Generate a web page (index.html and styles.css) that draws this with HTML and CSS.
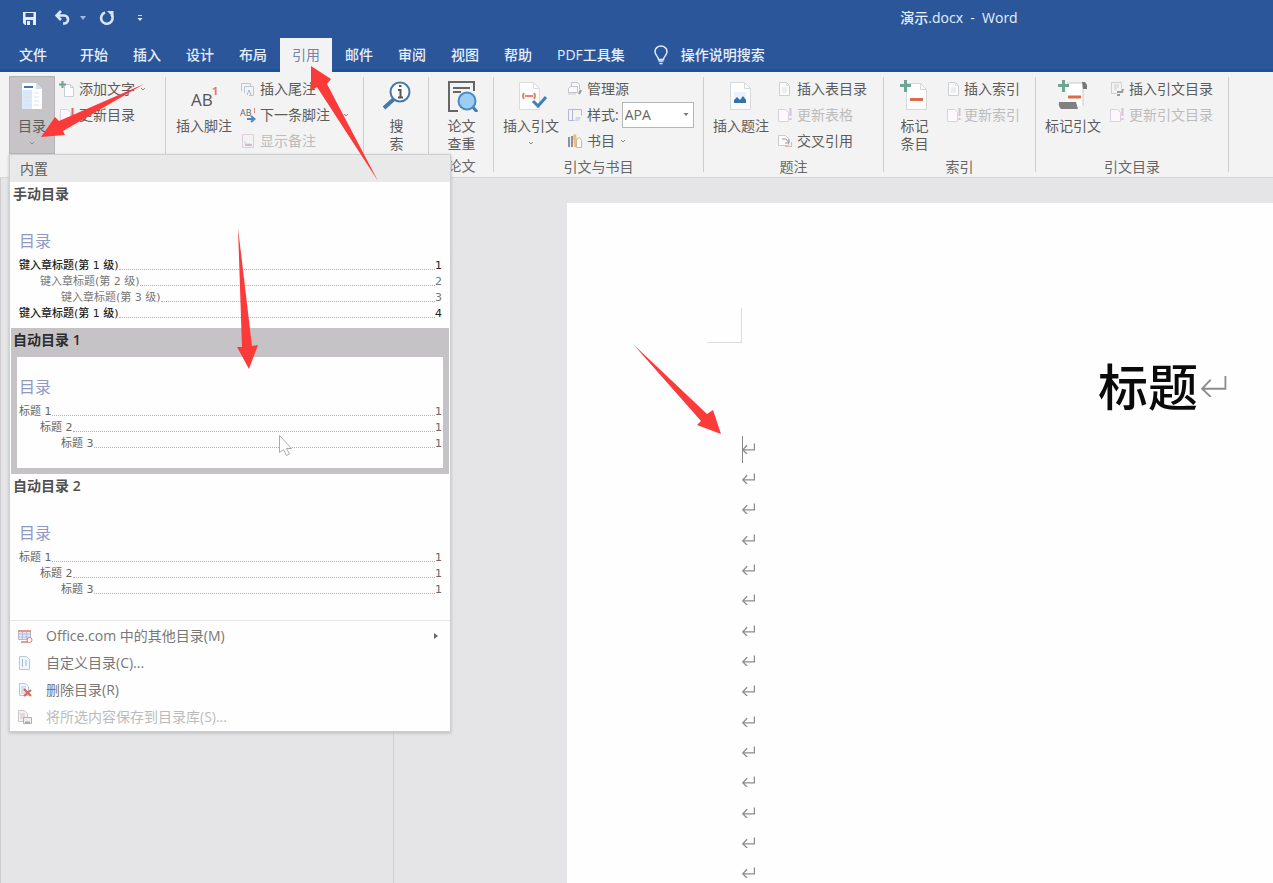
FILE: index.html
```html
<!DOCTYPE html>
<html lang="zh-CN">
<head>
<meta charset="utf-8">
<title>演示.docx - Word</title>
<link rel="stylesheet" href="styles.css">
</head>
<body>
<svg class="defs" aria-hidden="true">
  <symbol id="chev" viewBox="0 0 8 6"><path d="M2 2l2 2 2-2" fill="none" stroke="currentColor"/></symbol>
  <symbol id="ret" viewBox="0 0 28 24"><path d="M27 1v14H2M11 5L1.500 15L11 24" fill="none" stroke="currentColor" stroke-width="var(--sw)"/></symbol>
  <symbol id="update" viewBox="0 0 16 16"><path d="M1.500 2.500h7l3 3v9h-10z" fill="#fcf8fc" stroke="#dccfe0"/><path d="M13.500 1v8M13.500 11v2" stroke="currentColor" stroke-width="2"/></symbol>
  <symbol id="page" viewBox="0 0 16 16"><path d="M2.500 1.500h7l3 3v10h-10z" fill="#fbfbfb" stroke="#ccd0d6"/><path d="M9.500 1.500v3h3M5 7h5M5 9h5M5 11h5" fill="none" stroke="#dde0e4"/></symbol>
</svg>
<header class="titlebar">
  <div class="qat">
    <button class="qbtn" aria-label="保存"><svg width="15" height="15" viewBox="0 0 15 15"><path d="M1 1h13v13H3l-2-2z" fill="#e6efff"/><path d="M3.500 2h8v4h-8zM4 9h7v5H4z" fill="#2b579a"/><path d="M5 10h3v4H5z" fill="#e6efff"/></svg></button>
    <button class="qbtn undo" aria-label="撤消"><svg width="16" height="16" viewBox="0 0 16 16"><path d="M2 5.500h6.500a4 4 0 0 1 1 8H8M6 1L1.500 5.500L6 10" fill="none" stroke="#d9e6fb" stroke-width="2.600"/></svg><svg class="qchev" width="8" height="6" viewBox="0 0 8 6"><path d="M1 1h6L4 5z" fill="currentColor"/></svg></button>
    <button class="qbtn" aria-label="重复"><svg width="16" height="16" viewBox="0 0 16 16"><path d="M6 2.500a5.800 5.800 0 1 0 6.500 2" fill="none" stroke="#d9e6fb" stroke-width="2.600"/><path d="M8 1h6.500v6.500z" fill="#d9e6fb"/></svg></button>
    <button class="qbtn more" aria-label="自定义快速访问工具栏"><svg width="6" height="8" viewBox="0 0 6 8"><path d="M1 1.500h4" stroke="#b9d2f5"/><path d="M.500 4h5L3 7z" fill="#e6efff"/></svg></button>
  </div>
  <h1 class="wtitle">演示.docx&nbsp; -&nbsp; Word</h1>
</header>
<nav class="tabs">
  <button class="tab file">文件</button>
  <button class="tab">开始</button>
  <button class="tab">插入</button>
  <button class="tab">设计</button>
  <button class="tab">布局</button>
  <button class="tab active">引用</button>
  <button class="tab">邮件</button>
  <button class="tab">审阅</button>
  <button class="tab">视图</button>
  <button class="tab">帮助</button>
  <button class="tab">PDF工具集</button>
  <button class="tab tell"><svg width="14" height="20" viewBox="0 0 14 20"><path d="M4.500 14.500c0-3-3.500-4-3.500-8a6 5.500 0 0 1 12 0c0 4-3.500 5-3.500 8z" fill="none" stroke="#dfeaff" stroke-width="1.500"/><path d="M4.500 16h5M5.500 18.500h3" stroke="#dfeaff" stroke-width="1.500"/></svg>操作说明搜索</button>
</nav>

<section class="ribbon">
  <div class="group g-toc">
    <div class="gbody">
      <button class="big pressed"><svg class="bi" viewBox="0 0 32 32"><path d="M6 3h14l6 6v20H6z" fill="#fff"/><path d="M20 3v6h6z" fill="#d7dde4"/><path d="M8 7h9" stroke="#3f77b5" stroke-width="2"/><path d="M6 10h10v19H6z" fill="#dce9f8"/><path d="M8 13h7M8 17h7M8 21h7M8 25h7M18 13h5M18 17h5M18 21h5M18 25h5" stroke="#d3e3f5"/></svg><span>目录</span><svg class="chev" width="8" height="6"><use href="#chev"/></svg></button>
      <div class="col">
        <button class="small"><svg class="si" viewBox="0 0 16 16"><path d="M5.500 3.500h6l3 3v9h-9z" fill="#fbfbfb" stroke="#c5d0d8"/><path d="M11.500 3.500v3h3" fill="none" stroke="#c5d0d8"/><path d="M3.500 0v7M0 3.500h7" stroke="#6fa090" stroke-width="2"/></svg>添加文字<svg class="chev" width="8" height="6"><use href="#chev"/></svg></button>
        <button class="small"><svg class="si red" viewBox="0 0 16 16"><use href="#update"/></svg>更新目录</button>
      </div>
    </div>
    <div class="glabel">目录</div>
  </div>
  <div class="group g-note">
    <div class="gbody">
      <button class="big"><svg class="bi" viewBox="0 0 32 32"><text class="ab" x="3" y="26">AB</text><text class="sup" x="24" y="15">1</text></svg><span>插入脚注</span></button>
      <div class="col">
        <button class="small"><svg class="si" viewBox="0 0 16 16"><path d="M1.500 10V2.500h9V5M4.500 12V5.500h9v9H9" fill="none" stroke="#b8c6da"/><path d="M7 14l2-5 2 5" fill="none" stroke="#a9b9d0"/></svg>插入尾注</button>
        <button class="small"><svg class="si" viewBox="0 0 16 16"><text class="abs" x="0" y="9">AB</text><path d="M14.500 1v5" stroke="#e08a78"/><path d="M7 12h7M11 9l3.500 3-3.500 3" fill="none" stroke="#4d87c4" stroke-width="2"/></svg>下一条脚注<svg class="chev far" width="8" height="6"><use href="#chev"/></svg></button>
        <button class="small" disabled><svg class="si" viewBox="0 0 16 16"><path d="M2.500 1.500h11v13h-11zM5 11h6M5 11V8" fill="none" stroke="#dccddd"/><path d="M5 12h7" stroke="#c9bccb" stroke-width="2"/></svg>显示备注</button>
      </div>
    </div>
    <div class="glabel">脚注</div>
  </div>
  <div class="group g-one">
    <div class="gbody">
      <button class="big"><svg class="bi" viewBox="0 0 32 32"><path d="M13 19L3 28" stroke="#4678ac" stroke-width="4"/><circle cx="19" cy="12" r="9.500" fill="#fafcff" stroke="#4678ac" stroke-width="2"/><path d="M17 10h2.500v7M17 17.500h5M18 6h2.500" fill="none" stroke="#555" stroke-width="2"/></svg><span>搜<br>索</span></button>
    </div>
    <div class="glabel">搜索</div>
  </div>
  <div class="group g-one">
    <div class="gbody">
      <button class="big"><svg class="bi" viewBox="0 0 32 32"><path d="M12 31H3V2h25v9" fill="none" stroke="#666" stroke-width="2"/><path d="M7 8h17M7 12h8" stroke="#666" stroke-width="2"/><path d="M26 26l5 6" stroke="#3e7cb4" stroke-width="3"/><circle cx="21" cy="21" r="8.500" fill="#9ecdf4" stroke="#4a8ac4" stroke-width="2"/></svg><span>论文<br>查重</span></button>
    </div>
    <div class="glabel">论文</div>
  </div>
  <div class="group g-cite">
    <div class="gbody">
      <button class="big"><svg class="bi" viewBox="0 0 32 32"><path d="M4.500 2.500h14l6 6v21h-20z" fill="#fdfdfd" stroke="#d9dce0"/><path d="M18.500 2.500v6h6" fill="none" stroke="#d9dce0"/><path d="M9 13q-2 3 0 6M19 13q2 3 0 6M10 16h8" fill="none" stroke="#e2866c" stroke-width="2"/><path d="M18 21l5 5 8-9" fill="none" stroke="#3f7fbf" stroke-width="3"/></svg><span>插入引文</span><svg class="chev" width="8" height="6"><use href="#chev"/></svg></button>
      <div class="col">
        <button class="small"><svg class="si" viewBox="0 0 16 16"><path d="M4.500 6V1.500h6l2 2V8M1.500 7.500l2-2h7v6h-9z" fill="#fafafa" stroke="#c2c4c8"/><path d="M1 13h8" stroke="#c9cbd0"/><path d="M12 13l2-4" stroke="#8d9196" stroke-width="2"/></svg>管理源</button>
        <div class="small field"><svg class="si" viewBox="0 0 16 16"><path d="M1.500 2.500h13v6M1.500 2.500v11h6M5.500 2.500v11" fill="none" stroke="#b5b6d6"/><path d="M9 10l5 0-2 4h-4z" fill="#d2d8e6"/></svg><label for="style">样式:</label><span class="sel"><select id="style"><option>APA</option></select><svg width="6" height="4" viewBox="0 0 6 4"><path d="M.500 0h5L3 3z" fill="#777"/></svg></span></div>
        <button class="small"><svg class="si" viewBox="0 0 16 16"><path d="M1 4h2v10H1zM4 3h2v11H4z" fill="#8d8fa5"/><path d="M6 2l3-1 2 13H7z" fill="#f0c070"/><path d="M9.500 6.500l3-2 2 3v7h-5z" fill="#fff" stroke="#c8b79a"/></svg>书目<svg class="chev" width="8" height="6"><use href="#chev"/></svg></button>
      </div>
    </div>
    <div class="glabel">引文与书目</div>
  </div>
  <div class="group g-cap">
    <div class="gbody">
      <button class="big"><svg class="bi" viewBox="0 0 32 32"><path d="M5.500 2.500h14l6 6v21h-20z" fill="#fdfdfd" stroke="#d5dade"/><path d="M19.500 2.500v6h6" fill="none" stroke="#d5dade"/><path d="M9 12h12v11H9z" fill="#eaf3fd"/><path d="M9 23v-3l3-3 3 3 3-4 3 4v3z" fill="#3870ae"/></svg><span>插入题注</span></button>
      <div class="col">
        <button class="small"><svg class="si"><use href="#page"/></svg>插入表目录</button>
        <button class="small" disabled><svg class="si"><use href="#update"/></svg>更新表格</button>
        <button class="small"><svg class="si" viewBox="0 0 16 16"><path d="M1.500 2.500h7l3 3v7h-10z" fill="#fbfbfb" stroke="#c9ccd0"/><path d="M5 6h4l3 4M12 6v4H8" fill="none" stroke="#999"/><path d="M8 13.500h7M14.500 9v5" stroke="#e5b6b6"/></svg>交叉引用</button>
      </div>
    </div>
    <div class="glabel">题注</div>
  </div>
  <div class="group g-idx">
    <div class="gbody">
      <button class="big"><svg class="bi" viewBox="0 0 32 32"><path d="M7.500 3.500h14l6 6v20h-20z" fill="#fdfdfd" stroke="#d5d7da"/><path d="M21.500 3.500v6h6" fill="none" stroke="#d5d7da"/><path d="M6.500 0v12M1 5.500h11" stroke="#6fa594" stroke-width="3"/><path d="M11 19.500h13" stroke="#dc6a4c" stroke-width="3"/></svg><span>标记<br>条目</span></button>
      <div class="col">
        <button class="small"><svg class="si"><use href="#page"/></svg>插入索引</button>
        <button class="small" disabled><svg class="si"><use href="#update"/></svg>更新索引</button>
      </div>
    </div>
    <div class="glabel">索引</div>
  </div>
  <div class="group g-auth">
    <div class="gbody">
      <button class="big"><svg class="bi" viewBox="0 0 32 32"><path d="M10 3h16v23H10z" fill="#fff"/><path d="M10 3h17M26 6v20" stroke="#c9c9c9"/><path d="M25 2h3l2 3v4h-4z" fill="#777"/><path d="M2 22h17l2 7H4q-3-3-2-7z" fill="#808080"/><path d="M6.500 0v12M1 5.500h11" stroke="#6fa594" stroke-width="3"/><path d="M11 17h13" stroke="#dc6a4c" stroke-width="3"/></svg><span>标记引文</span></button>
      <div class="col">
        <button class="small"><svg class="si" viewBox="0 0 16 16"><path d="M2.500 1.500h10v6M2.500 1.500v11h5M5 4h5M5 6h5M5 8h3" fill="none" stroke="#cbced3"/><path d="M8 11h5l1-3M8 14h3" fill="none" stroke="#999" stroke-width="2"/></svg>插入引文目录</button>
        <button class="small" disabled><svg class="si"><use href="#update"/></svg>更新引文目录</button>
      </div>
    </div>
    <div class="glabel">引文目录</div>
  </div>
</section>

<main class="workspace">
  <aside class="pane"></aside>
  <div class="canvas">
    <article class="paper">
      <div class="corner"></div>
      <h2 class="doctitle">标题<svg width="27" height="22"><use href="#ret"/></svg></h2>
      <div class="paras">
        <p class="caret"><svg><use href="#ret"/></svg></p>
        <p><svg><use href="#ret"/></svg></p><p><svg><use href="#ret"/></svg></p>
        <p><svg><use href="#ret"/></svg></p><p><svg><use href="#ret"/></svg></p>
        <p><svg><use href="#ret"/></svg></p><p><svg><use href="#ret"/></svg></p>
        <p><svg><use href="#ret"/></svg></p><p><svg><use href="#ret"/></svg></p>
        <p><svg><use href="#ret"/></svg></p><p><svg><use href="#ret"/></svg></p>
        <p><svg><use href="#ret"/></svg></p><p><svg><use href="#ret"/></svg></p>
        <p><svg><use href="#ret"/></svg></p><p><svg><use href="#ret"/></svg></p>
      </div>
    </article>
  </div>
</main>

<div class="menu">
  <div class="mhead">内置</div>
  <button class="tile">
    <span class="tname">手动目录</span>
    <span class="preview">
      <span class="ptitle">目录</span>
      <span class="row strong">键入章标题(第 1 级)<i></i>1</span>
      <span class="row l2">键入章标题(第 2 级)<i></i>2</span>
      <span class="row l3">键入章标题(第 3 级)<i></i>3</span>
      <span class="row strong">键入章标题(第 1 级)<i></i>4</span>
    </span>
  </button>
  <button class="tile hover">
    <span class="tname">自动目录 1</span>
    <span class="preview">
      <span class="ptitle">目录</span>
      <span class="row auto">标题 1<i></i>1</span>
      <span class="row auto l2">标题 2<i></i>1</span>
      <span class="row auto l3">标题 3<i></i>1</span>
    </span>
  </button>
  <button class="tile">
    <span class="tname">自动目录 2</span>
    <span class="preview">
      <span class="ptitle">目录</span>
      <span class="row auto">标题 1<i></i>1</span>
      <span class="row auto l2">标题 2<i></i>1</span>
      <span class="row auto l3">标题 3<i></i>1</span>
    </span>
  </button>
  <div class="mlist">
    <button class="mitem"><svg class="si" viewBox="0 0 16 16"><path d="M1.500 2.500h12v9h-12z" fill="#e4e8f6" stroke="#b9b4cf"/><path d="M1 3h13" stroke="#dd9a8c" stroke-width="2"/><path d="M2 6h11M2 9h11M5.500 4v7M9.500 4v7" stroke="#b8bddb"/><path d="M4 14h7" stroke="#e0a090" stroke-width="2"/><circle cx="12.500" cy="12" r="2.500" fill="#fff" stroke="#dc7d70"/></svg>Office.com 中的其他目录(M)<svg class="sub" width="4" height="6" viewBox="0 0 4 6"><path d="M0 0l4 3-4 3z" fill="#666"/></svg></button>
    <button class="mitem"><svg class="si" viewBox="0 0 16 16"><path d="M2.500 1.500h7l3 3v10h-10z" fill="#f3f7fc" stroke="#b7c8de"/><path d="M5.500 4v8M8 6h2M8 8h2M8 10h2" stroke="#9db9db"/></svg>自定义目录(C)...</button>
    <button class="mitem"><svg class="si" viewBox="0 0 16 16"><path d="M2.500 1.500h6l3 3v9h-9z" fill="#f3f7fc" stroke="#b7c8de"/><path d="M4 5h5M4 7h5M4 9h5M4 11h5" stroke="#b5cbe5"/><path d="M7 7l7 7M14 8l-7 6" stroke="#d8655a" stroke-width="2"/></svg>删除目录(R)</button>
    <button class="mitem" disabled><svg class="si" viewBox="0 0 16 16"><path d="M1.500 1.500h6l3 3v8h-9z" fill="#f4f0f2" stroke="#cfc4ca"/><path d="M3 5h5M3 7h5M3 9h5" stroke="#cfc4ca"/><path d="M6.500 8.500h8v6h-8z" fill="#eee" stroke="#b5aeb3"/><path d="M8 13.500h5" stroke="#aaa" stroke-width="2"/></svg>将所选内容保存到目录库(S)...</button>
  </div>
</div>

<svg class="marks" width="1273" height="883" viewBox="0 0 1273 883" aria-hidden="true">
  <path d="M279.500 435.500v17l4-3 3 6 3-1.500-3-5.500h5z" fill="#fff" stroke="#aaa"/>
  <g fill="#fb3a3a">
    <path d="M144 84L59 121l-4-4-14 20 24-2-2-4z"/>
    <path d="M378 181L317 87l-6 4V66l20 13-4 5z"/>
    <path d="M238 228l4 119h-5l12 22 9-24-6 1z"/>
    <path d="M633 344l74 70 6-4 8 24-24-9 4-4z"/>
  </g>
</svg>
</body>
</html>
```
FILE: styles.css
```css
* { box-sizing: border-box; }
html, body { height: 100%; }
body {
  margin: 0;
  position: relative;
  display: flex;
  flex-direction: column;
  overflow: hidden;
  font: 14px/18px "Open Sans", "Noto Sans CJK SC", sans-serif;
  color: #5c5c5c;
  background: #e5e5e7;
}
button {
  font: inherit;
  color: inherit;
  background: none;
  border: 0;
  padding: 0;
  margin: 0;
  text-align: left;
}
svg { display: block; flex: none; }
.defs { position: absolute; width: 0; height: 0; }

/* Title bar */
.titlebar {
  flex: none;
  height: 38px;
  padding-bottom: 2px;
  display: flex;
  align-items: center;
  background: #2b579a;
  color: #e6efff;
}
.qat { flex: 0 0 645px; display: flex; align-items: center; padding-left: 22px; gap: 18px; }
.qbtn { display: flex; align-items: center; }
.undo { gap: 8px; }
.qchev { color: #9dbce8; }
.undo + .qbtn { margin-left: -6px; }
.more { margin-left: 4px; }
.wtitle { flex: 1; margin: 0; font-size: 14px; font-weight: 500; text-align: center; }

/* Tabs */
.tabs {
  flex: none;
  height: 34px;
  display: flex;
  gap: 1px;
  padding-left: 7px;
  background: linear-gradient(#2b579a 31px, #1b539d 31px);
  color: #e6efff;
  font-weight: 500;
}
.tab { padding: 0 12px; white-space: nowrap; }
.file { margin-right: 8px; }
.tab.active { background: #f3f3f3; color: #7483ae; font-weight: 400; }
.tell { display: flex; align-items: center; gap: 13px; padding-left: 16px; }

/* Ribbon */
.ribbon {
  flex: none;
  display: flex;
  height: 106px;
  padding-top: 4px;
  background: #f3f3f3;
  border-bottom: 1px solid #d6d6d8;
}
.group {
  flex: none;
  position: relative;
  display: flex;
  flex-direction: column;
  padding-left: 5px;
}
.group::after {
  content: "";
  position: absolute;
  right: 0;
  top: 1px;
  bottom: 5px;
  width: 1px;
  background: #cfcfd1;
}
.g-toc { width: 166px; padding-left: 9px; }
.g-note { width: 198px; padding-left: 6px; }
.g-one { width: 65px; padding: 0; align-items: center; }
.g-cite { width: 210px; }
.g-cap { width: 180px; }
.g-idx { width: 152px; }
.g-auth { width: 193px; }
.gbody { display: flex; height: 78px; }
.glabel { padding-right: 6px; line-height: 26px; height: 24px; text-align: center; color: #666; }
.g-one .glabel { padding: 0; }
.big {
  display: flex;
  flex-direction: column;
  align-items: center;
  min-width: 46px;
  padding: 4px 4px 0;
  text-align: center;
}
.g-idx .big { padding: 4px 12px 0 10px; }
.pressed { background: #c6c4c6; box-shadow: inset 0 0 0 1px #b4b2b4; }
.bi { width: 32px; height: 32px; margin-bottom: 5px; }
.g-idx .big { min-width: 0; width: 53px; }
.big .chev { margin-top: 5px; }
.chev { color: #8a8a8a; }
.col { flex: 1; display: grid; grid-template-rows: repeat(3, 26px); }
.small { display: flex; align-items: center; gap: 4px; padding-left: 4px; white-space: nowrap; }
.far { margin-left: 8px; }
.small:disabled, .mitem:disabled { color: #bcbcbc; }
.si { width: 16px; height: 16px; color: #d3c3d6; }
.g-idx .si { margin-right: -2px; }
.red { color: #e0695f; }
.ab { font: 17px "Open Sans", sans-serif; fill: #555; }
.sup { font: bold 11px "Open Sans", sans-serif; fill: #df7b66; }
.abs { font: 9px "Open Sans", sans-serif; fill: #666; }
.sel { position: relative; width: 72px; height: 26px; margin-left: -1px; }
.sel select {
  appearance: none;
  width: 100%;
  height: 100%;
  border: 1px solid #b5b5b5;
  border-radius: 0;
  background: #fff;
  padding: 0 2px;
  font: inherit;
  color: #666;
}
.sel svg { position: absolute; right: 5px; top: 11px; }

/* Document area */
.workspace { flex: 1; min-height: 0; display: flex; overflow: hidden; }
.pane { flex: 0 0 394px; border-left: 1px solid #cdcdcf; border-right: 1px solid #d0d0d2; }
.canvas { flex: 1; min-width: 0; overflow: hidden; padding: 25px 0 0 173px; }
.paper { width: 1191px; padding: 105px 175px 0; background: #fefefe; }
.corner {
  width: 35px;
  height: 35px;
  margin-left: -35px;
  border: solid #dcdcdc;
  border-width: 0 1px 1px 0;
}
.doctitle {
  --sw: 2px;
  display: flex;
  justify-content: center;
  align-items: center;
  gap: 2px;
  margin: 0;
  padding-bottom: 2px;
  font-size: 50px;
  line-height: 89px;
  font-weight: 500;
  color: #0a0a0a;
}
.doctitle svg { color: #8c8c8c; margin-bottom: 4px; }
.paras { --sw: 3px; display: grid; grid-template-rows: repeat(15, 1fr); height: 455px; }
.paras p { display: flex; align-items: center; margin: 0; padding-bottom: 2px; color: #8c8c8c; }
.paras svg { width: 13px; height: 11px; }
.caret { background: linear-gradient(#888, #888) 0 50% / 1px 27px no-repeat; }

/* Table-of-contents gallery */
.menu {
  position: absolute;
  left: 9px;
  top: 154px;
  width: 442px;
  background: #fefefe;
  border: 1px solid #cfcfd1;
  box-shadow: 0 1px 3px #b5b9b9;
}
.mhead { height: 27px; padding-left: 10px; line-height: 27px; background: #e9e9e9; }
.tile { display: block; width: 438px; height: 146px; margin-left: 1px; }
.tile.hover { background: #c5c3c5; }
.tname { display: block; padding-left: 2px; line-height: 24px; height: 25px; font-weight: 600; color: #505050; }
.hover .tname { color: #2c2c2c; }
.preview { display: block; height: 111px; margin: 4px 6px 6px; padding: 18px 1px 0 2px; background: #fefefe; }
.ptitle { display: block; margin-bottom: 5px; font-size: 16px; line-height: 24px; color: #9298c4; }
.row { display: flex; font: 11px/16px "DejaVu Sans", "Noto Sans CJK SC", sans-serif; color: #777; }
.row i { flex: 1; height: 12px; border-bottom: 1px dotted #b0b0b0; }
.strong { font-weight: 500; color: #222; }
.auto { color: #666; }
.l2 { padding-left: 21px; }
.l3 { padding-left: 42px; }
.mlist { padding: 1px 0; border-top: 1px solid #e6e6e6; }
.mitem { display: flex; align-items: center; gap: 13px; width: 100%; height: 27px; padding: 0 12px 0 7px; color: #777; }
.sub { margin-left: auto; }

/* Pointer and callout arrows */
.marks { position: absolute; left: 0; top: 0; pointer-events: none; }
```
